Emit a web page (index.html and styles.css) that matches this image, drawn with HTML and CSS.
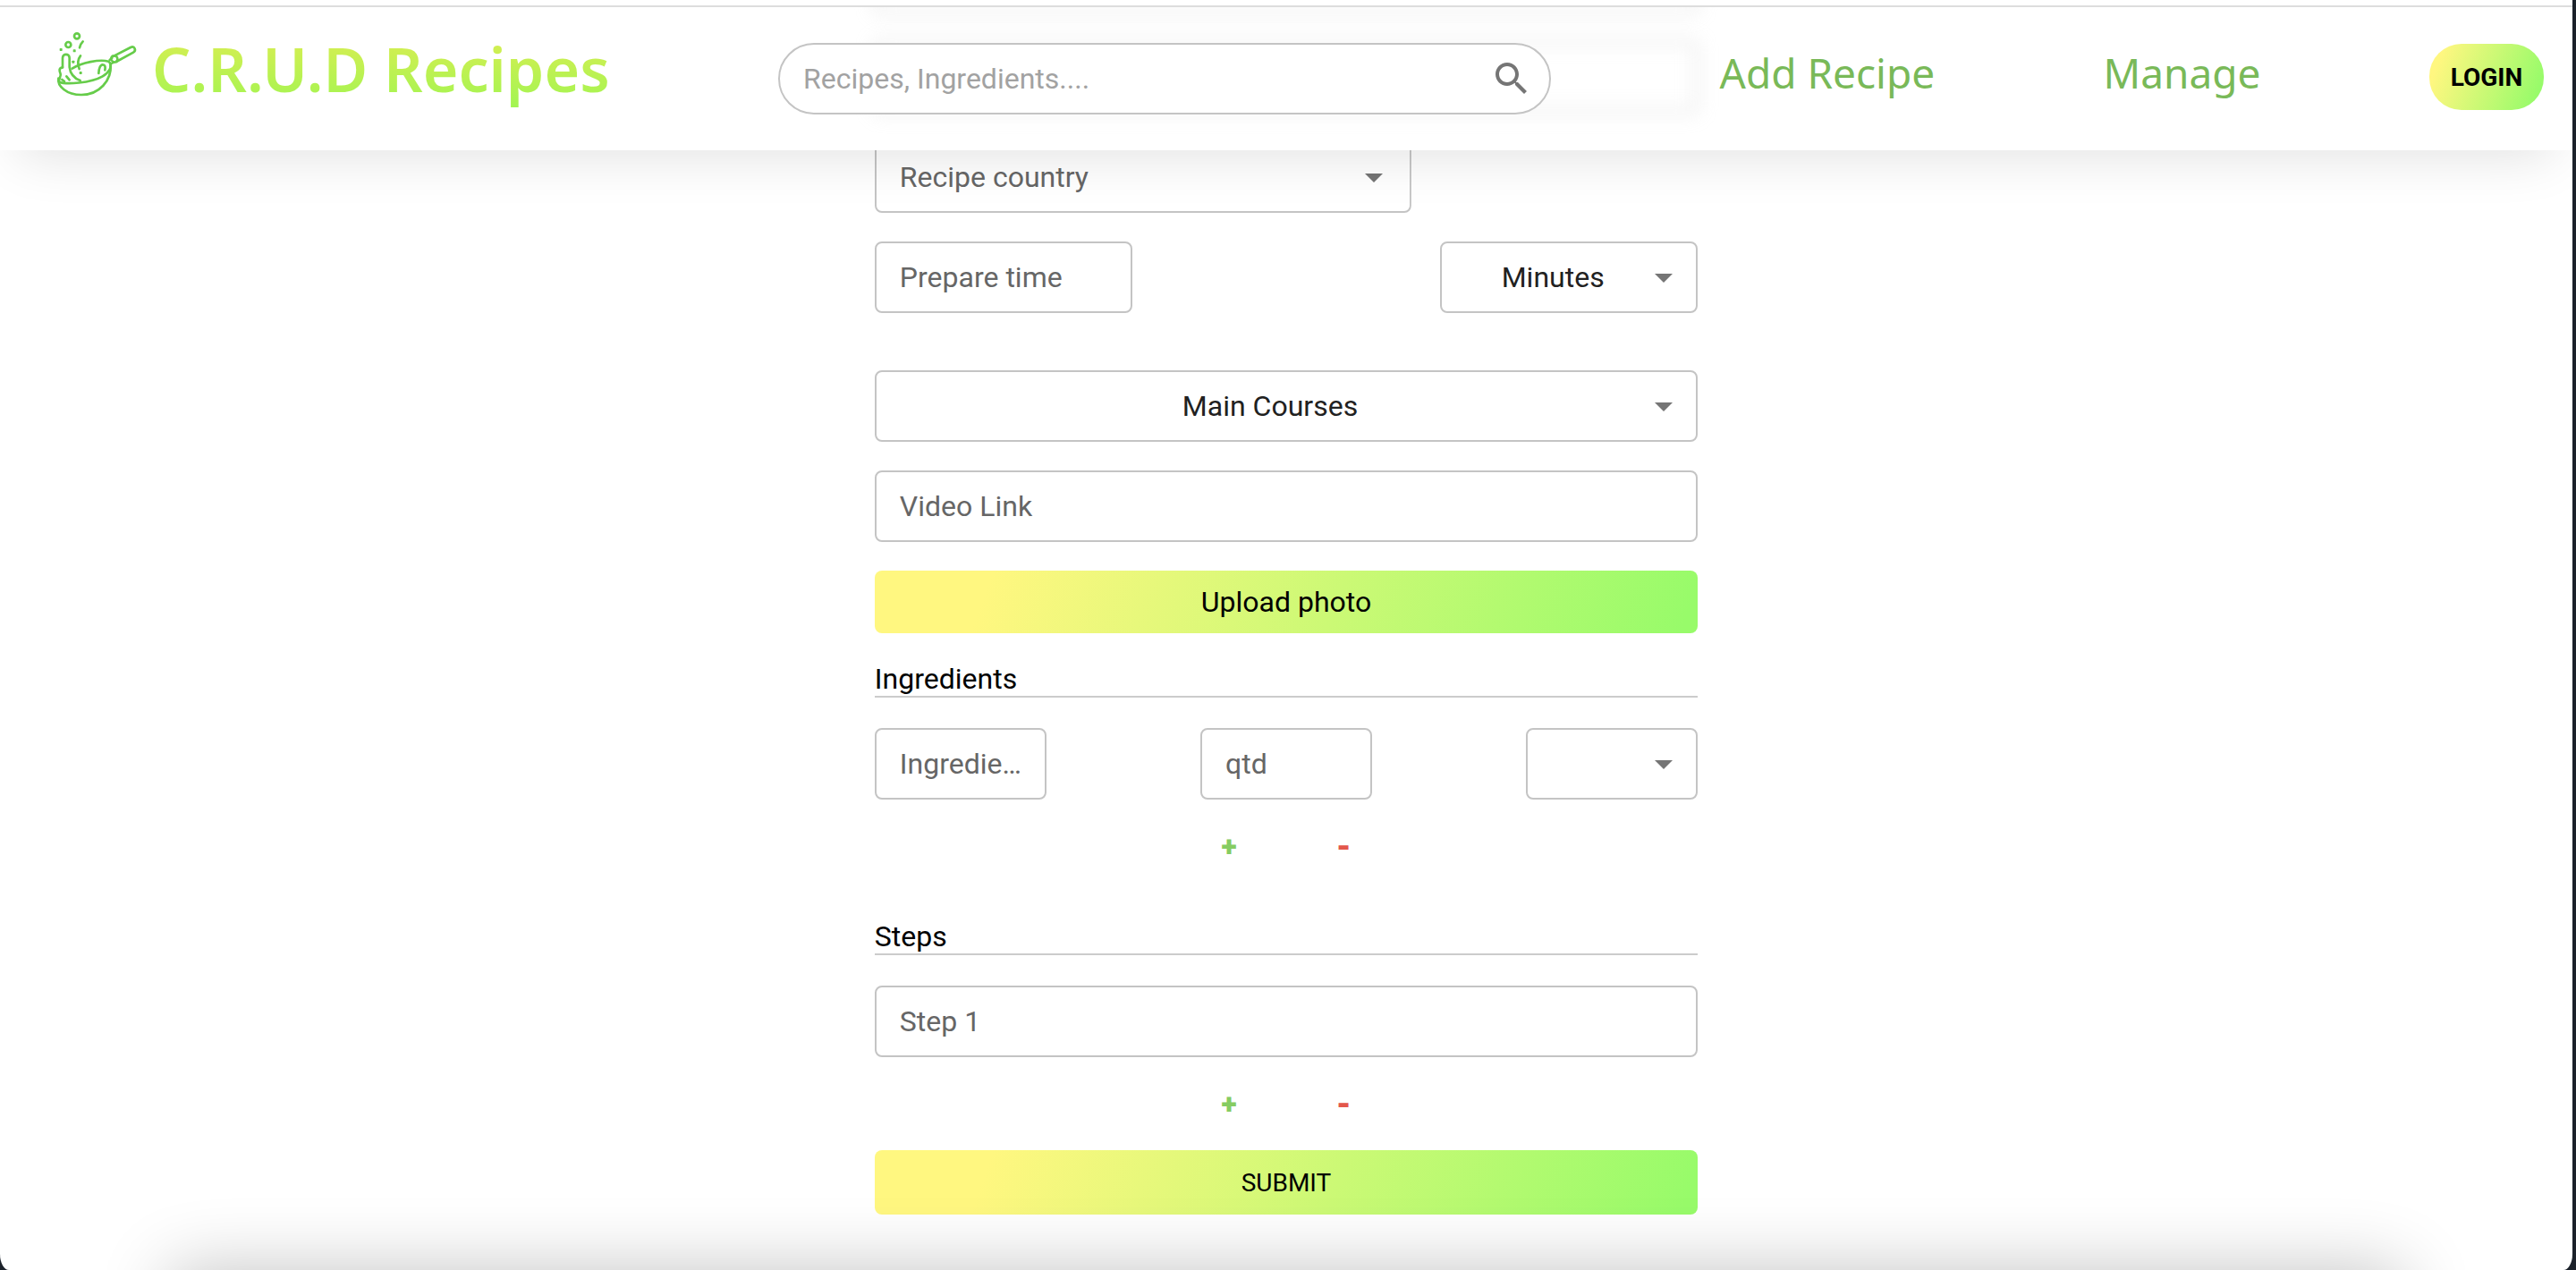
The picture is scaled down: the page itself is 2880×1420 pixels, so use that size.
FILE: index.html
```html
<!DOCTYPE html>
<html lang="en">
<head>
<meta charset="utf-8">
<title>C.R.U.D Recipes</title>
<link rel="stylesheet" href="styles.css">
</head>
<body>
<div class="window">
  <header class="header">
    <a class="brand" href="#">
      <svg class="brand-logo" viewBox="0 0 360 300" aria-hidden="true">
        <g fill="none" stroke="#66cc4a" stroke-width="8" stroke-linecap="round" stroke-linejoin="round">
          <circle cx="108" cy="61" r="9"/>
          <circle cx="79" cy="90" r="9"/>
          <path d="M128 79q-9 9-11 21"/>
          <path d="M120 127q-14 18-4 44"/>
          <path d="M60 166v-32c0-15 23-15 23 0v31c3 24 16 38 36 45"/>
          <path d="M60 166c-14 3-11 11-7 22 3 8-8 18-4 27 22 9 105 4 145-19 12-7 19-14 24-23 5-9 4-22-4-27-30-8-90 4-122 24"/>
          <path d="M46 203c-4 25 26 55 77 55 60 0 102-48 98-102"/>
          <path d="M73 196l10 12M58 207l8 6"/>
          <path d="M181 186c0-16 6-30 14-29 8 0 9 8 7 18"/>
          <path d="M232 128l56-29c14-6 20 10 9 17l-57 31"/>
          <path d="M232 128c12-4 17 16 6 20-12 4-20-12-11-20zM218 141l8-7M221 154l12-6"/>
        </g>
        <g fill="#66cc4a">
          <rect x="50" y="102" width="9" height="9" rx="2"/>
          <rect x="95" y="106" width="9" height="9" rx="2"/>
          <rect x="91" y="143" width="9" height="9" rx="2"/>
          <rect x="116" y="180" width="9" height="9" rx="2"/>
        </g>
      </svg>
      <span class="brand-name">C.R.U.D Recipes</span>
    </a>
    <form class="search" role="search">
      <input class="search-input" type="text" placeholder="Recipes, Ingredients...." aria-label="Search recipes">
      <button class="search-button" type="button" aria-label="Search">
        <svg class="icon" viewBox="0 0 24 24"><path d="M15.5 14h-.79l-.28-.27C15.41 12.59 16 11.11 16 9.5 16 5.91 13.09 3 9.5 3S3 5.91 3 9.5 5.91 16 9.5 16c1.61 0 3.09-.59 4.23-1.57l.27.28v.79l5 4.99L20.49 19l-4.99-5zm-6 0C7.01 14 5 11.99 5 9.5S7.01 5 9.5 5 14 7.01 14 9.5 11.99 14 9.5 14z"/></svg>
      </button>
    </form>
    <a class="nav-link" href="#">Add Recipe</a>
    <a class="nav-link" href="#">Manage</a>
    <button class="login" type="button">LOGIN</button>
  </header>

  <main class="content">
    <form class="recipe-form">
      <input class="field under-bar" type="text" aria-label="Title">
      <input class="field under-bar" type="text" aria-label="Description">
      <div class="picker picker-country">
        <input class="field" type="text" placeholder="Recipe country" aria-label="Recipe country">
        <svg class="icon arrow" viewBox="0 0 24 24"><path d="M7 10l5 5 5-5z"/></svg>
      </div>
      <div class="row row-time">
        <input class="field half" type="text" placeholder="Prepare time" aria-label="Prepare time">
        <div class="picker half">
          <select class="field" aria-label="Time unit"><option>Minutes</option><option>Hours</option></select>
          <svg class="icon arrow" viewBox="0 0 24 24"><path d="M7 10l5 5 5-5z"/></svg>
        </div>
      </div>
      <div class="picker">
        <select class="field" aria-label="Category"><option>Main Courses</option></select>
        <svg class="icon arrow" viewBox="0 0 24 24"><path d="M7 10l5 5 5-5z"/></svg>
      </div>
      <input class="field" type="url" placeholder="Video Link" aria-label="Video Link">
      <button class="bar upload" type="button">Upload photo</button>

      <section class="group group-ingredients">
        <h2 class="heading">Ingredients</h2>
        <div class="row">
          <input class="field third" type="text" placeholder="Ingredient" aria-label="Ingredient">
          <input class="field third" type="text" placeholder="qtd" aria-label="Quantity">
          <div class="picker third-picker">
            <select class="field" aria-label="Unit"><option></option><option>g</option></select>
            <svg class="icon arrow" viewBox="0 0 24 24"><path d="M7 10l5 5 5-5z"/></svg>
          </div>
        </div>
        <div class="actions">
          <button class="action add" type="button" aria-label="Add ingredient">+</button>
          <button class="action remove" type="button" aria-label="Remove ingredient">-</button>
        </div>
      </section>

      <section class="group">
        <h2 class="heading">Steps</h2>
        <input class="field" type="text" placeholder="Step 1" aria-label="Step 1">
        <div class="actions">
          <button class="action add" type="button" aria-label="Add step">+</button>
          <button class="action remove" type="button" aria-label="Remove step">-</button>
        </div>
      </section>

      <button class="bar submit" type="submit">SUBMIT</button>
    </form>
  </main>
  <footer class="footer"></footer>
</div>
</body>
</html>
```
FILE: styles.css
```css
* { box-sizing: border-box; }

html, body { height: 100%; }

body {
  margin: 0;
  padding-right: 4px;
  background: #1c222b;
  font-family: Roboto, sans-serif;
  font-size: 32px;
  color: #000;
  overflow: hidden;
}

input, select, button { font: inherit; color: inherit; margin: 0; }

.window {
  position: relative;
  display: flex;
  flex-direction: column;
  height: 100vh;
  border-top: 6px solid #fff;
  border-radius: 0 0 10px 10px / 0 0 18px 18px;
  background: #fff;
  overflow: hidden;
}

/* The bar stays over the scrolled form. */
.header {
  position: absolute;
  inset: 0 0 auto 0;
  z-index: 2;
  display: flex;
  align-items: center;
  justify-content: space-between;
  height: 162px;
  padding: 0 32px 0 50px;
  border-top: 2px solid #ddd;
  box-shadow: 0 26px 60px -20px rgba(0, 0, 0, 0.12);
}

.brand {
  display: flex;
  align-items: flex-start;
  padding-bottom: 22px;
  text-decoration: none;
}

.brand-logo { width: 120px; height: 100px; }

.brand-name {
  font-family: "Noto Sans", sans-serif;
  font-size: 68px;
  font-weight: 600;
  line-height: 114px;
  background: linear-gradient(#e6ec52, #98f652);
  background-clip: text;
  color: transparent;
}

.search {
  display: flex;
  align-items: center;
  width: 30vw;
  height: 80px;
  padding: 0 18px 0 26px;
  border: 2px solid #c4c4c4;
  border-radius: 40px;
  background: #fff;
}

.search-input {
  flex: 1;
  min-width: 0;
  padding: 0;
  border: 0;
  outline: 0;
  background: none;
}

.search-input::placeholder { color: #a2a2a2; opacity: 1; }

.search-button {
  display: flex;
  padding: 0;
  border: 0;
  background: none;
}

.icon { width: 48px; height: 48px; fill: #757575; }

.nav-link {
  padding-bottom: 14px;
  font-family: "Noto Sans", sans-serif;
  font-size: 46px;
  color: #79b958;
  text-decoration: none;
}

.login {
  width: 128px;
  height: 74px;
  margin-bottom: 4px;
  padding: 0;
  border: 0;
  border-radius: 36px;
  background: linear-gradient(110deg, #fff780 11%, #98fb6a 91%);
  font-size: 28px;
  font-weight: 700;
}

.content {
  flex: 1;
  min-height: 0;
  display: flex;
  justify-content: center;
}

/* The form is scrolled: its first field is partly past the top. */
.recipe-form {
  display: flex;
  flex-direction: column;
  gap: 32px;
  width: 32%;
  margin-top: -72px;
}

.field {
  flex: none;
  width: 100%;
  height: 80px;
  padding: 0 26px;
  border: 2px solid #c4c4c4;
  border-radius: 8px;
  outline: 0;
  background: none;
  text-overflow: ellipsis;
}

.field::placeholder { color: #666; opacity: 1; text-overflow: ellipsis; }

.under-bar { filter: blur(10px); }

.picker { display: grid; }

.picker > * { grid-area: 1 / 1; }

.picker select {
  appearance: none;
  padding-right: 62px;
  color: #212121;
  text-align: center;
  text-align-last: center;
}

.arrow {
  place-self: center end;
  margin-right: 14px;
  pointer-events: none;
}

.picker-country {
  width: 600px;
  clip-path: inset(10px 0 0);
}

.picker-country .arrow { margin-right: 18px; }

.row { display: flex; justify-content: space-between; }

.row-time { margin-bottom: 32px; }

.half { width: 288px; }

.third, .third-picker { width: 192px; }

.third { padding-right: 20px; }

.bar {
  flex: none;
  height: 72px;
  padding: 0;
  border: 0;
  border-radius: 8px;
  background: linear-gradient(110deg, #fff780 14%, #98fb6a 98%);
}

.upload { height: 70px; }

.submit { font-size: 28px; }

.group { display: flex; flex-direction: column; gap: 32px; }

.group-ingredients { padding-bottom: 30px; }

.heading {
  margin: 0 0 2px;
  border-bottom: 2px solid #ccc;
  font-size: 32px;
  font-weight: 400;
  line-height: 38px;
}

.actions { display: flex; justify-content: center; }

.action {
  width: 128px;
  height: 40px;
  padding: 0;
  border: 0;
  background: none;
  font-weight: 900;
  line-height: 38px;
}

.add { color: #86cc62; }

.remove {
  color: #e3574b;
  font-family: Inter, sans-serif;
}

/* Starts just under the fold, so only its shadow shows. */
.footer {
  flex: none;
  height: 200px;
  margin: 0 190px -200px;
  box-shadow: 0 0 80px rgba(0, 0, 0, 0.24);
}
```
